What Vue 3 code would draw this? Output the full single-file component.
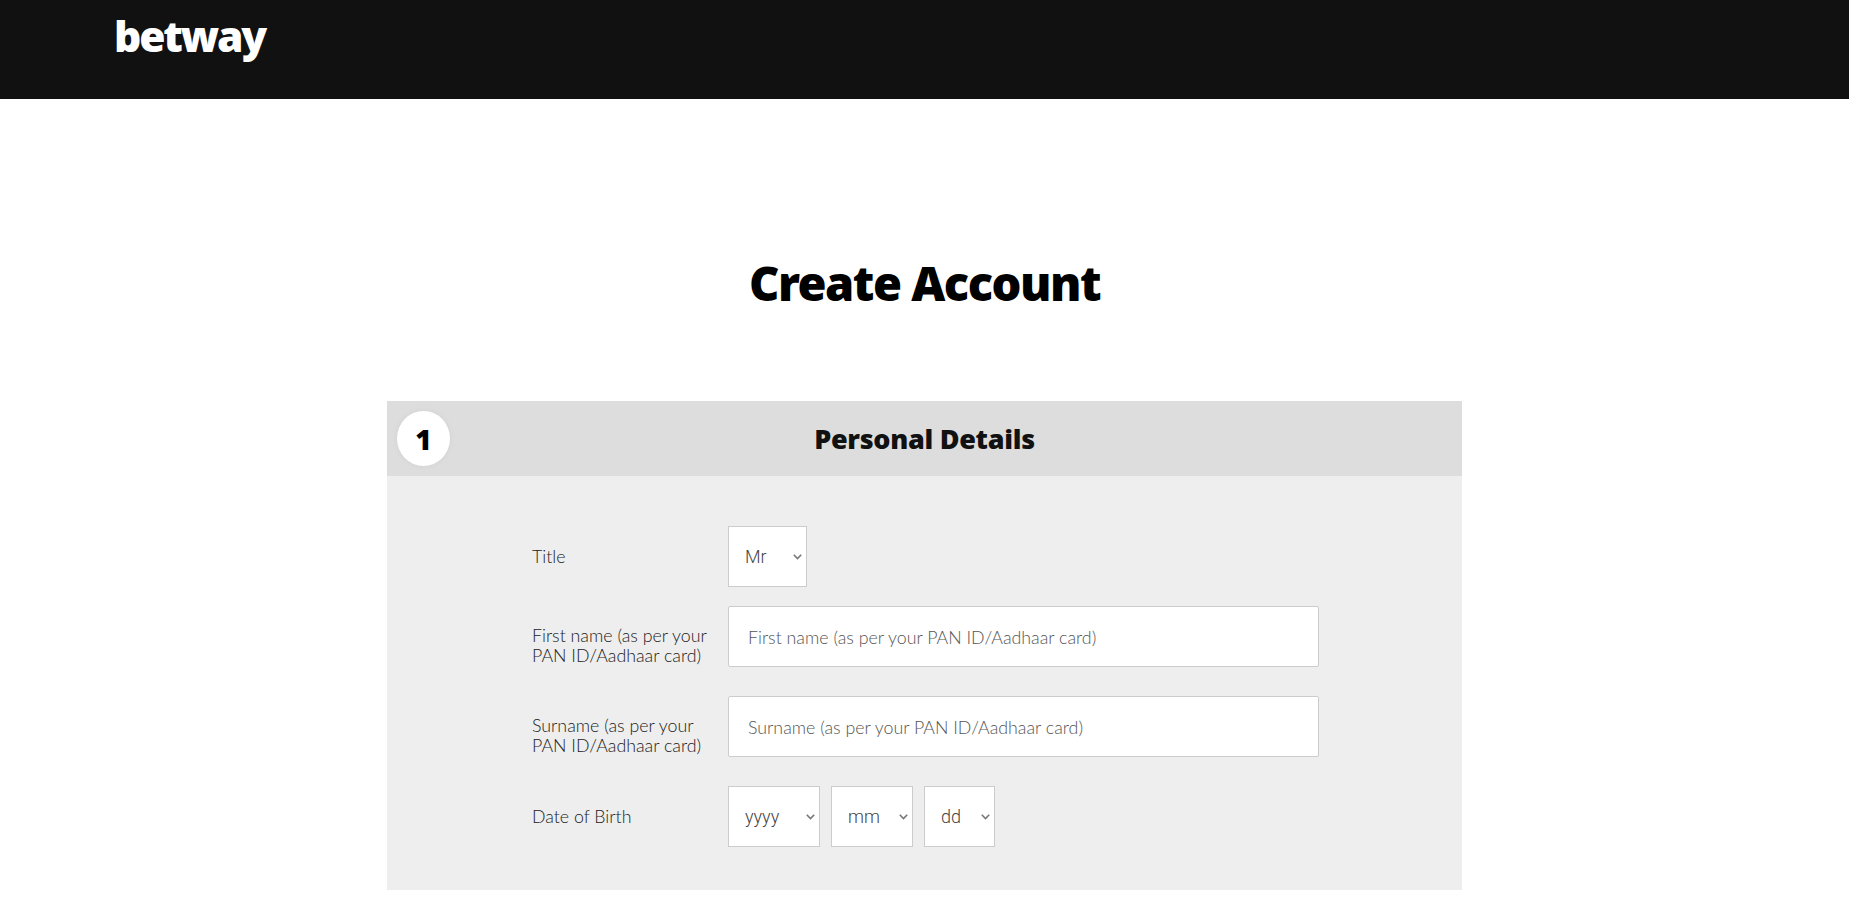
<script setup>
const years = ['yyyy', '2005', '2004', '2003']
const months = ['mm', '01', '02', '03']
const days = ['dd', '01', '02', '03']
</script>

<template>
  <div class="page">
    <header class="topbar">
      <span class="logo">betway</span>
    </header>
    <main class="main">
      <h1 class="title">Create Account</h1>
      <section class="panel">
        <div class="panel-head">
          <span class="step">1</span>
          <h2 class="panel-title">Personal Details</h2>
        </div>
        <form class="panel-body">
          <div class="row row-title">
            <label class="label">Title</label>
            <select class="sel sel-title"><option>Mr</option><option>Mrs</option><option>Ms</option></select>
          </div>
          <div class="row row-first">
            <label class="label label-two">First name (as per your<br />PAN ID/Aadhaar card)</label>
            <input class="input" type="text" placeholder="First name (as per your PAN ID/Aadhaar card)" />
          </div>
          <div class="row row-sur">
            <label class="label label-two">Surname (as per your<br />PAN ID/Aadhaar card)</label>
            <input class="input" type="text" placeholder="Surname (as per your PAN ID/Aadhaar card)" />
          </div>
          <div class="row row-dob">
            <label class="label">Date of Birth</label>
            <div class="dob">
              <select class="sel sel-y"><option v-for="y in years" :key="y">{{ y }}</option></select>
              <select class="sel sel-m"><option v-for="m in months" :key="m">{{ m }}</option></select>
              <select class="sel sel-d"><option v-for="d in days" :key="d">{{ d }}</option></select>
            </div>
          </div>
        </form>
      </section>
    </main>
  </div>
</template>

<style>
html, body { margin: 0; background: #fff; }
</style>

<style scoped>
.page { height: 903px; overflow: hidden; font-family: Lato, sans-serif; }
.topbar { height: 99px; background: #111; padding-left: 114px; box-sizing: border-box; }
.logo { display: block; color: #fff; font-family: "Open Sans", sans-serif; font-weight: 800; font-size: 42.5px; line-height: 54px; letter-spacing: -2.2px; padding-top: 9px; }
.main { display: flex; flex-direction: column; align-items: center; }
.title { margin: 155px 0 0; height: 147px; font-family: "Noto Sans", sans-serif; font-weight: 900; font-size: 47px; line-height: 59px; letter-spacing: -1.5px; color: #000; }
.panel { width: 1075px; }
.panel-head { height: 75px; background: #ddd; position: relative; display: flex; align-items: center; justify-content: center; }
.step { position: absolute; left: 10px; top: 10px; width: 53px; height: 55px; border-radius: 50%; background: #fff; box-shadow: 0 0 6px rgba(0,0,0,.05); display: flex; align-items: center; justify-content: center; font-family: "Noto Sans", sans-serif; font-weight: 900; font-size: 28px; color: #000; }
.panel-title { margin: 0; font-family: "Noto Sans", sans-serif; font-weight: 900; font-size: 27px; letter-spacing: -.3px; color: #111; }
.panel-body { height: 414px; box-sizing: border-box; background: #eee; padding: 50px 0 0 145px; }
.row { display: flex; align-items: center; height: 61px; }
.row-first { margin-top: 19px; }
.row-sur, .row-dob { margin-top: 29px; }
.label { width: 196px; padding-bottom: 2px; font-family: Lato, sans-serif; font-weight: 300; font-size: 17.8px; line-height: 20px; color: #222; }
.label-two { padding-top: 19px; }
.sel { height: 61px; box-sizing: border-box; appearance: none; background: #fff url("data:image/svg+xml,%3Csvg xmlns='http://www.w3.org/2000/svg' width='9' height='6'%3E%3Cpath d='M.8.8 4.5 4.5 8.2.8' fill='none' stroke='%23777' stroke-width='1.6'/%3E%3C/svg%3E") no-repeat right 4px center; border: 1px solid #ccc; border-radius: 0; font-family: Roboto, sans-serif; font-weight: 300; font-size: 18px; color: #444; padding: 0 0 0 16px; }
.sel-title { width: 79px; }
.input { width: 591px; height: 61px; box-sizing: border-box; background: #fff; border: 1px solid #ccc; border-radius: 2px; font-family: Lato, sans-serif; font-weight: 300; font-size: 17.8px; padding: 0 19px; outline: none; }
.input::placeholder { color: #555; opacity: 1; }
.dob { display: flex; gap: 11px; }
.sel-y { width: 92px; }
.sel-m { width: 82px; }
.sel-d { width: 71px; }
</style>
